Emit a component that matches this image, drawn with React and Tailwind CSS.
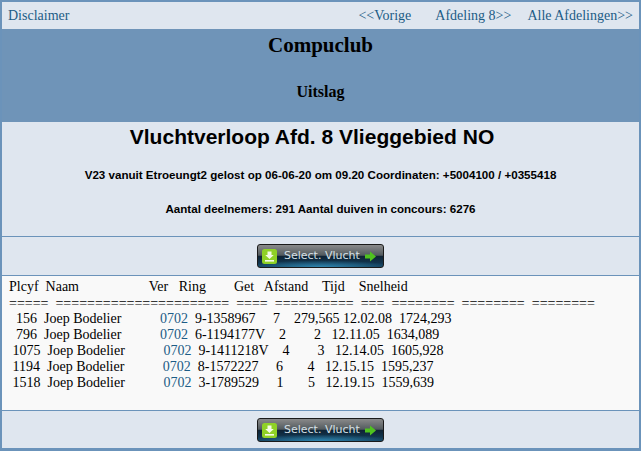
const serif = { fontFamily: '"Liberation Serif", serif' };

const header = 'Plcyf  Naam                    Ver   Ring        Get   Afstand    Tijd    Snelheid';
const rule = '=====  ======================  ====  ==========  ===  ========  ========  ========';
const rows = [
  ['  156  Joep Bodelier           ', '0702', '  9-1358967     7    279,565 12.02.08  1724,293'],
  ['  796  Joep Bodelier           ', '0702', '  6-1194177V    2        2   12.11.05  1634,089'],
  [' 1075  Joep Bodelier           ', '0702', '  9-1411218V    4        3   12.14.05  1605,928'],
  [' 1194  Joep Bodelier           ', '0702', '  8-1572227     6       4   12.15.15  1595,237'],
  [' 1518  Joep Bodelier           ', '0702', '  3-1789529     1       5   12.19.15  1559,639'],
];

function SelectButton() {
  return (
    <div className="flex h-[24px] w-[127px] items-center overflow-hidden rounded-[3px] border border-[#1a1a1a] bg-[radial-gradient(ellipse_60%_30%_at_50%_100%,#2f86b0,transparent),linear-gradient(#8a8a8a,#525a5e_47%,#0f2233_50%,#123a55_90%)]">
      <svg width="15" height="15" viewBox="0 0 15 15" className="ml-[4px] shrink-0">
        <rect width="15" height="15" rx="2.5" fill="#8fd126" />
        <path d="M5.5 2.5h4v3.5h2.3l-4.3 4-4.3-4h2.3z" fill="#f4fbe4" />
        <rect x="3" y="11" width="9" height="1.6" fill="#f4fbe4" />
      </svg>
      <span className="mt-px ml-[7px] text-[11px] whitespace-nowrap text-[#d5e0e6]" style={{ fontFamily: '"DejaVu Sans", sans-serif' }}>Select. Vlucht</span>
      <svg width="11" height="11" viewBox="0 0 11 11" className="ml-[5px] shrink-0">
        <path d="M0 3.5h5V0.5l6 5-6 5V7.5H0z" fill="#4fc21f" />
      </svg>
    </div>
  );
}

export default function App() {
  return (
    <div className="h-[451px] w-[641px] overflow-hidden border-x-2 border-t-2 border-b-[3px] border-[#6b93ba] bg-[#dfe6ef] text-black" style={serif}>
      <div className="flex h-[27px] items-center justify-between px-[6px] text-[14px] text-[#1c5c86]">
        <span>Disclaimer</span>
        <div className="flex">
          <span className="mr-[24px]">&lt;&lt;Vorige</span>
          <span className="mr-[16px]">Afdeling 8&gt;&gt;</span>
          <span>Alle Afdelingen&gt;&gt;</span>
        </div>
      </div>
      <div className="h-[93px] bg-[#6f94b8] text-center font-bold">
        <div className="pt-[4px] text-[21px] leading-6">Compuclub</div>
        <div className="pt-[25px] text-[16px] leading-5">Uitslag</div>
      </div>
      <div className="h-[115px] border-b border-[#6b93ba] text-center font-bold" style={{ fontFamily: '"Liberation Sans", sans-serif' }}>
        <div className="pt-[3px] pr-[17px] text-[21px] leading-6">Vluchtverloop Afd. 8 Vlieggebied NO</div>
        <div className="pt-[18px] text-[11.6px] leading-4">V23 vanuit Etroeungt2 gelost op 06-06-20 om 09.20 Coordinaten: +5004100 / +0355418</div>
        <div className="pt-[18px] text-[11.6px] leading-4">Aantal deelnemers: 291 Aantal duiven in concours: 6276</div>
      </div>
      <div className="flex h-[38px] items-start justify-center pt-[7px]">
        <SelectButton />
      </div>
      <div className="h-[136px] border-y border-[#6b93ba] bg-[#f9f9f9] pl-[7px] pt-[3px] text-[14px] leading-4 whitespace-pre">
        <div>{header}</div>
        <div className="mt-px leading-[15px]">{rule}</div>
        {rows.map((r, i) => (
          <div key={i}>{r[0]}<span className="text-[#1c5c86]">{r[1]}</span>{r[2]}</div>
        ))}
      </div>
      <div className="flex h-[37px] items-start justify-center pt-[7px]">
        <SelectButton />
      </div>
    </div>
  );
}
